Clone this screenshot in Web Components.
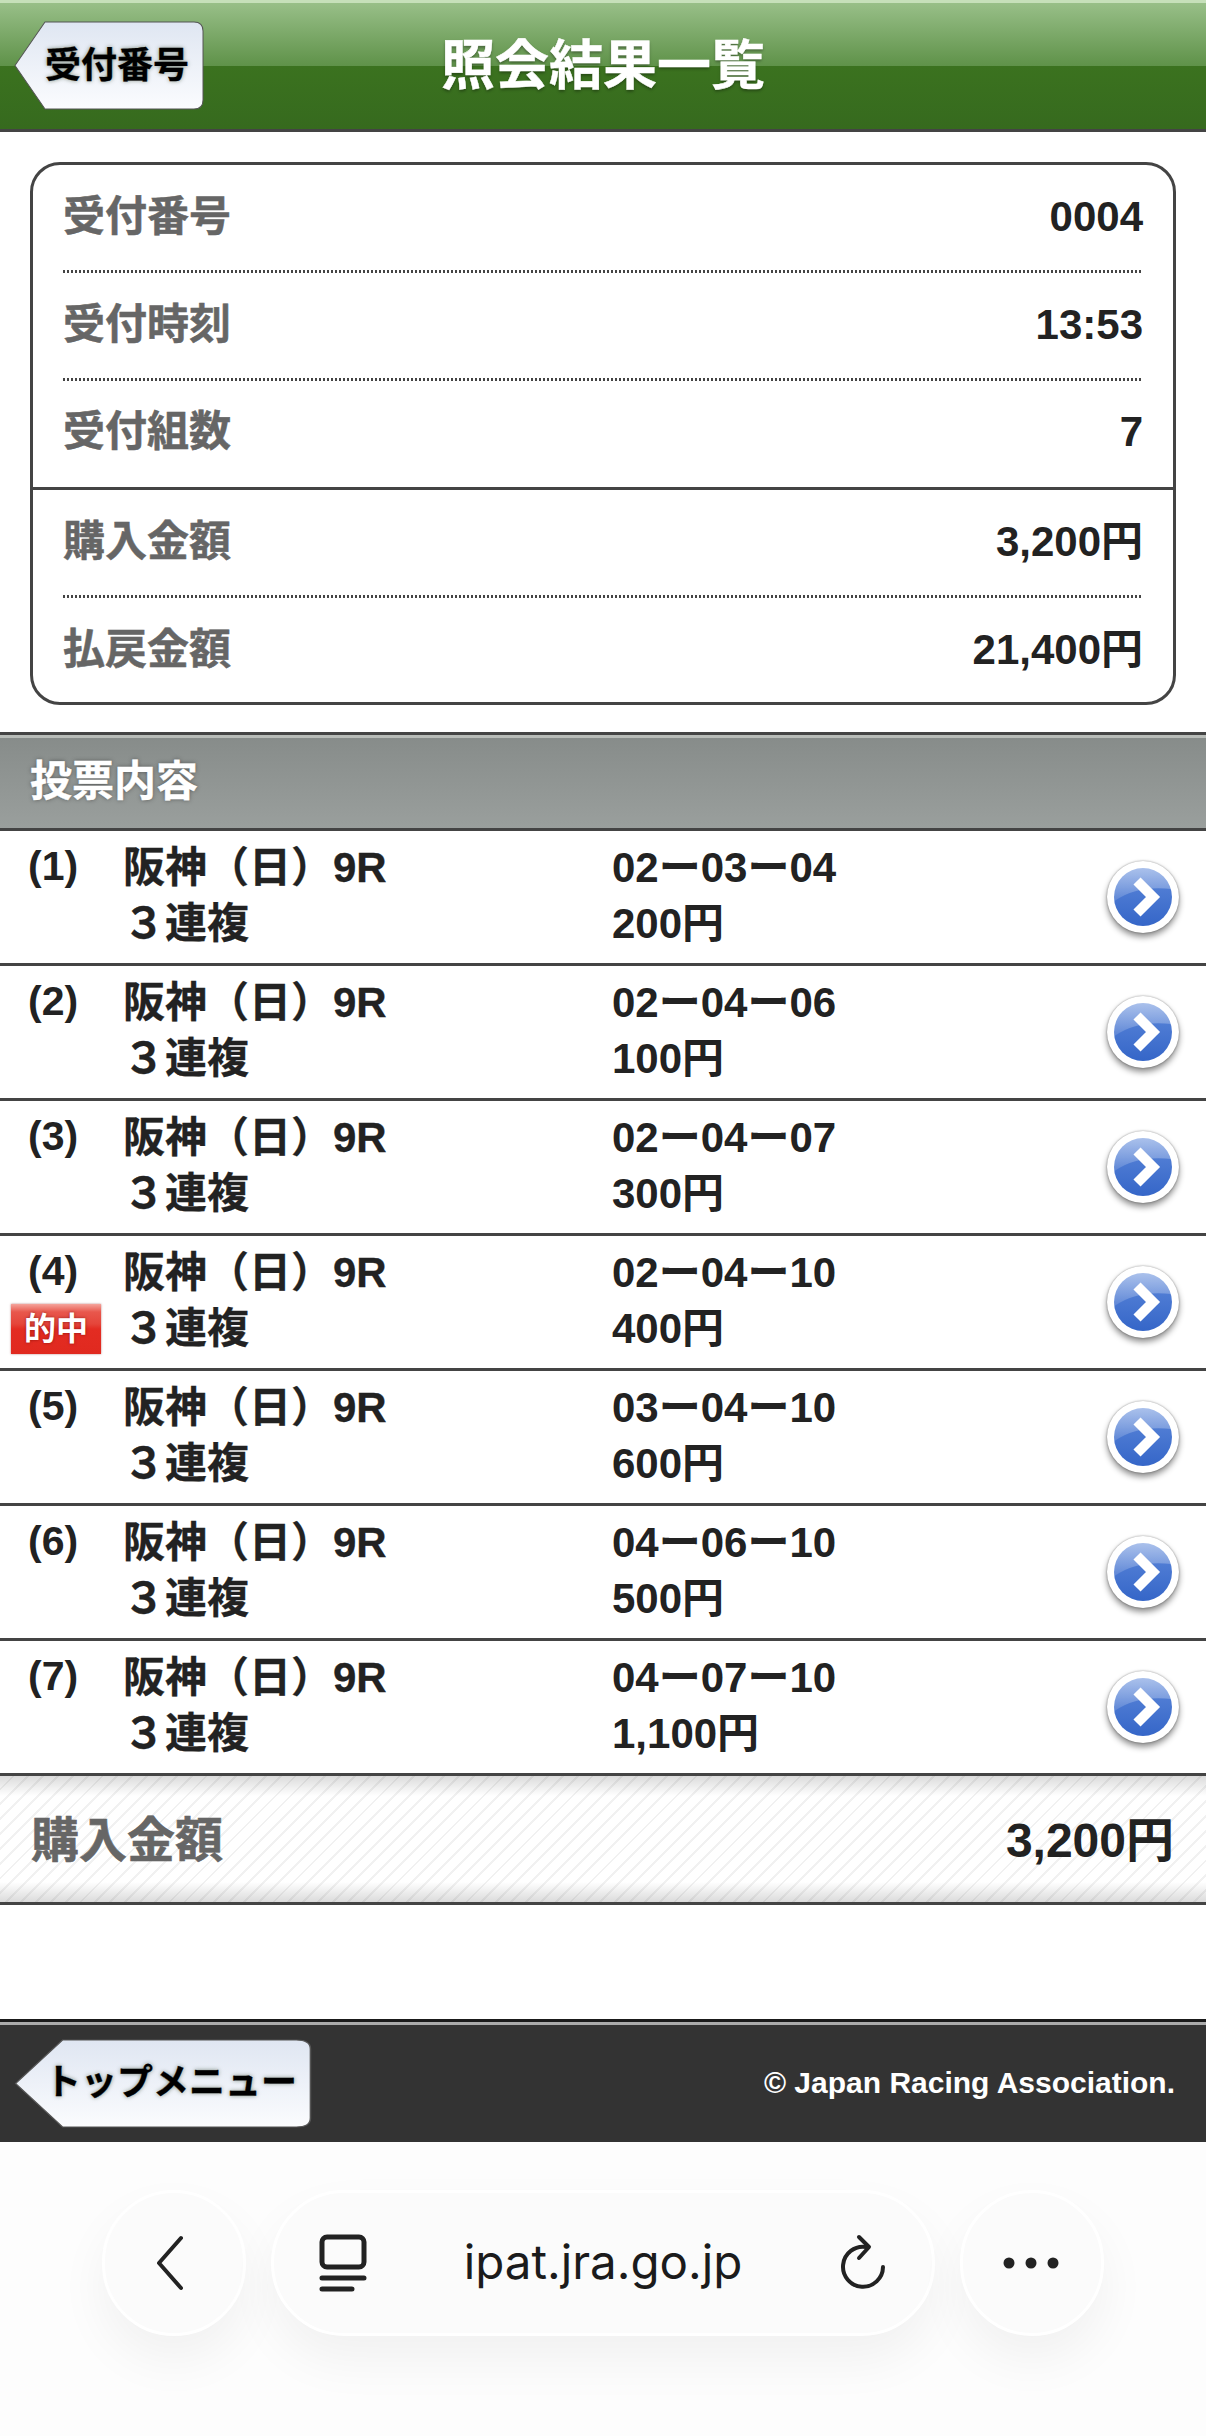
<!DOCTYPE html>
<html lang="ja">
<head>
<meta charset="utf-8">
<title>照会結果一覧</title>
<style>
  html, body { margin: 0; padding: 0; background: #fff; }
  body { font-family: "Liberation Sans", "Noto Sans CJK JP", sans-serif; font-weight: 700; color: #222; }
  .cjk { -webkit-text-stroke: .3px #222; }
</style>
</head>
<body>
<jra-header>
  <back-tag slot="back" size="36">受付番号</back-tag>
  照会結果一覧
</jra-header>

<summary-card>
  <summary-row label="受付番号">0004</summary-row>
  <summary-row label="受付時刻">13:53</summary-row>
  <summary-row label="受付組数" end>7</summary-row>
  <summary-row label="購入金額">3,200円</summary-row>
  <summary-row label="払戻金額" plain>21,400円</summary-row>
</summary-card>

<section-bar>投票内容</section-bar>

<bet-row><span slot="num">(1)</span><span slot="race" class="cjk">阪神（日）9R</span><span slot="kind" class="cjk">３連複</span><span slot="combo">02ー03ー04</span><span slot="amount">200円</span></bet-row>
<bet-row><span slot="num">(2)</span><span slot="race" class="cjk">阪神（日）9R</span><span slot="kind" class="cjk">３連複</span><span slot="combo">02ー04ー06</span><span slot="amount">100円</span></bet-row>
<bet-row><span slot="num">(3)</span><span slot="race" class="cjk">阪神（日）9R</span><span slot="kind" class="cjk">３連複</span><span slot="combo">02ー04ー07</span><span slot="amount">300円</span></bet-row>
<bet-row><span slot="num">(4)</span><hit-badge slot="badge">的中</hit-badge><span slot="race" class="cjk">阪神（日）9R</span><span slot="kind" class="cjk">３連複</span><span slot="combo">02ー04ー10</span><span slot="amount">400円</span></bet-row>
<bet-row><span slot="num">(5)</span><span slot="race" class="cjk">阪神（日）9R</span><span slot="kind" class="cjk">３連複</span><span slot="combo">03ー04ー10</span><span slot="amount">600円</span></bet-row>
<bet-row><span slot="num">(6)</span><span slot="race" class="cjk">阪神（日）9R</span><span slot="kind" class="cjk">３連複</span><span slot="combo">04ー06ー10</span><span slot="amount">500円</span></bet-row>
<bet-row><span slot="num">(7)</span><span slot="race" class="cjk">阪神（日）9R</span><span slot="kind" class="cjk">３連複</span><span slot="combo">04ー07ー10</span><span slot="amount">1,100円</span></bet-row>

<total-bar label="購入金額">3,200円</total-bar>

<jra-footer>
  <back-tag slot="back" size="36">トップメニュー</back-tag>
  © Japan Racing Association.
</jra-footer>

<browser-bar>ipat.jra.go.jp</browser-bar>

<script>
class JraHeader extends HTMLElement {
    connectedCallback() {
        this.attachShadow({ mode: 'open' }).innerHTML = `
        <style>
            :host { display: block; height: 129px; border-bottom: 3px solid #444;
                background: linear-gradient(#c6e0ba 0 3px, #98bf88 3px, #5f9249 66px, #3b721f 66px, #366a1e 129px); }
            .bar { display: grid; grid-template-columns: 1fr auto 1fr; align-items: start; padding-top: 21px; }
            .tag { padding-left: 14px; }
            .title { font-size: 54px; line-height: 82px; margin-top: 4px; color: #fff; -webkit-text-stroke: .4px #fff; text-shadow: 0 2px 3px rgba(0,0,0,.35); }
        </style>
        <div class="bar">
            <div class="tag"><slot name="back"></slot></div>
            <div class="title"><slot></slot></div>
            <div></div>
        </div>`;
    }
}

class BackTag extends HTMLElement {
    connectedCallback() {
        const size = this.getAttribute('size') || 36;
        this.attachShadow({ mode: 'open' }).innerHTML = `
        <style>
            :host { display: inline-flex; position: relative; align-items: center; height: 89px; padding: 0 15px 0 31px;
                color: #000; font-size: ${size}px; line-height: 1; -webkit-text-stroke: .3px #000; text-shadow: 0 0 4px rgba(30,50,20,.55); }
            svg { position: absolute; left: 0; top: 0; width: 100%; height: 100%; }
            span { position: relative; white-space: nowrap; }
        </style>
        <svg viewBox="0 0 190 89" preserveAspectRatio="none">
            <defs><linearGradient id="g" x1="0" y1="0" x2="0" y2="1">
                <stop offset="0" stop-color="#dfe6f2"/><stop offset="1" stop-color="#fbfcfe"/>
            </linearGradient></defs>
            <path d="M1 44.5 L31 1 H180 Q189 1 189 10 V79 Q189 88 180 88 H31 Z" fill="url(#g)" stroke="#555" stroke-width="1"/>
        </svg>
        <span><slot></slot></span>`;
    }
}

class SummaryCard extends HTMLElement {
    connectedCallback() {
        this.attachShadow({ mode: 'open' }).innerHTML = `
        <style>
            :host { display: block; margin: 30px 30px 27px; height: 537px; border: 3px solid #444; border-radius: 30px; overflow: hidden; }
        </style>
        <slot></slot>`;
    }
}

class SummaryRow extends HTMLElement {
    connectedCallback() {
        this.attachShadow({ mode: 'open' }).innerHTML = `
        <style>
            :host { display: block; padding: 0 30px; }
            :host([end]) { border-bottom: 3px solid #444; }
            .row { display: flex; justify-content: space-between; align-items: center; height: 108px; box-sizing: border-box; padding-bottom: 4px;
                font-size: 42px; line-height: 56px;
                background: repeating-linear-gradient(90deg, #444 0 2px, transparent 2px 4px) left bottom / 100% 3px no-repeat; }
            :host([end]) .row, :host([plain]) .row { background: none; }
            :host([end]) .row { height: 106px; }
            .label { color: #666; -webkit-text-stroke: .5px #666; }
            .value { color: #222; }
        </style>
        <div class="row"><span class="label">${this.getAttribute('label')}</span><span class="value"><slot></slot></span></div>`;
    }
}

class SectionBar extends HTMLElement {
    connectedCallback() {
        this.attachShadow({ mode: 'open' }).innerHTML = `
        <style>
            :host { display: block; border-top: 3px solid #444; border-bottom: 3px solid #444; height: 93px;
                padding-left: 30px; font-size: 42px; line-height: 93px; color: #fff; -webkit-text-stroke: .4px #fff;
                background: linear-gradient(#b8bcb8 0 3px, #878c8a 3px, #9a9f9d);
                text-shadow: 0 0 4px rgba(40,40,40,.6); }
        </style>
        <slot></slot>`;
    }
}

class BetRow extends HTMLElement {
    connectedCallback() {
        this.attachShadow({ mode: 'open' }).innerHTML = `
        <style>
            :host { display: grid; grid-template-columns: 123px 489px 1fr 98px; grid-auto-rows: 56px; align-items: center;
                padding: 9px 0 11px; border-bottom: 3px solid #444; font-size: 42px; color: #222; line-height: 56px; white-space: nowrap; }
            .num { padding-left: 28px; margin-top: -4px; font-size: 41px; }
            .badge { padding-left: 11px; display: flex; }
            .arrow { grid-column: 4; grid-row: 1 / span 2; display: flex; margin: 2px 0 0 -1px; }
        </style>
        <div class="num"><slot name="num"></slot></div>
        <div><slot name="race"></slot></div>
        <div><slot name="combo"></slot></div>
        <div class="arrow"><arrow-button></arrow-button></div>
        <div class="badge"><slot name="badge"></slot></div>
        <div><slot name="kind"></slot></div>
        <div><slot name="amount"></slot></div>`;
    }
}

class ArrowButton extends HTMLElement {
    connectedCallback() {
        this.attachShadow({ mode: 'open' }).innerHTML = `
        <style>
            :host { display: block; width: 72px; height: 72px; border-radius: 50%; background: #fff;
                box-shadow: 0 4px 6px rgba(0,0,0,.45), 0 0 2px rgba(0,0,0,.4); }
            svg { display: block; width: 72px; height: 72px; }
        </style>
        <svg viewBox="0 0 72 72">
            <defs>
                <linearGradient id="b" x1="0" y1="0" x2="0" y2="1">
                    <stop offset="0" stop-color="#5d88da"/><stop offset="1" stop-color="#3566c8"/>
                </linearGradient>
                <linearGradient id="s" x1="0" y1="0" x2="0" y2="1">
                    <stop offset="0" stop-color="#fff" stop-opacity=".5"/><stop offset="1" stop-color="#fff" stop-opacity=".12"/>
                </linearGradient>
            </defs>
            <circle cx="36" cy="36" r="29" fill="url(#b)"/>
            <path d="M7.5 40 Q30 24 64.5 28 A29 29 0 0 0 7.5 40 Z" fill="url(#s)"/>
            <path d="M30 20 L46 36 L30 52" fill="none" stroke="#fff" stroke-width="10"/>
        </svg>`;
    }
}

class HitBadge extends HTMLElement {
    connectedCallback() {
        this.attachShadow({ mode: 'open' }).innerHTML = `
        <style>
            :host { display: block; width: 90px; height: 50px; font-size: 32px; line-height: 50px; text-align: center; color: #fff;
                background: linear-gradient(#f4a49c, #e8574c 8px, #e5453a 40%, #e32c22 50%, #e0291f);
                box-shadow: 0 0 2px rgba(120,0,0,.5); text-shadow: 0 0 3px rgba(90,0,0,.6); }
        </style>
        <slot></slot>`;
    }
}

class TotalBar extends HTMLElement {
    connectedCallback() {
        this.attachShadow({ mode: 'open' }).innerHTML = `
        <style>
            :host { display: flex; justify-content: space-between; align-items: center; height: 123px; padding: 3px 32px 0 31px;
                border-bottom: 3px solid #444; font-size: 48px; line-height: 60px; color: #222;
                background:
                    linear-gradient(rgba(0,0,0,.14), rgba(0,0,0,0) 20px, rgba(0,0,0,0) 106px, rgba(0,0,0,.14)),
                    repeating-linear-gradient(135deg, #fff 0 8.5px, #f1f1f1 8.5px 10.5px); }
            .label { color: #666; -webkit-text-stroke: .6px #666; }
        </style>
        <span class="label">${this.getAttribute('label')}</span><span class="value"><slot></slot></span>`;
    }
}

class JraFooter extends HTMLElement {
    connectedCallback() {
        this.attachShadow({ mode: 'open' }).innerHTML = `
        <style>
            :host { display: flex; justify-content: space-between; align-items: center; height: 123px;
                margin-top: 114px; padding: 2px 31px 0 14px; box-sizing: border-box;
                border-top: 3px solid #1a1a1a; box-shadow: inset 0 3px 0 #aaa; background: #333; color: #fff; font-size: 30px; }
        </style>
        <slot name="back"></slot><span><slot></slot></span>`;
    }
}

class BrowserBar extends HTMLElement {
    connectedCallback() {
        this.attachShadow({ mode: 'open' }).innerHTML = `
        <style>
            :host { display: flex; gap: 25px; height: 294px; padding: 48px 0 0 102px; box-sizing: border-box;
                background: #fdfdfd; color: #1b1b1b; font-family: Inter, "Liberation Sans", sans-serif; font-weight: 400; }
            .pill { height: 146px; box-sizing: border-box; border: 3px solid #fff; border-radius: 73px; background: #fbfbfb;
                box-shadow: 0 24px 50px rgba(0,0,0,.05); display: flex; align-items: center; }
            .round { width: 144px; justify-content: center; }
            .back { padding-right: 8px; box-sizing: border-box; }
            .url { width: 664px; padding: 0 45px; justify-content: space-between; font-size: 47.5px; }
            .url span { margin-top: -4px; }
            svg { display: block; fill: none; stroke: #222; stroke-linecap: round; stroke-linejoin: round; }
        </style>
        <div class="pill round back">
            <svg width="30" height="56" viewBox="0 0 30 56" stroke-width="4"><path d="M26 3 L4 28 L26 53"/></svg>
        </div>
        <div class="pill url">
            <svg width="48" height="58" viewBox="0 0 48 58" stroke-width="5"><rect x="3" y="3" width="42" height="30" rx="5"/><path d="M3 44 H45 M3 55 H33"/></svg>
            <span><slot></slot></span>
            <svg width="48" height="58" viewBox="0 0 48 58" stroke-width="4"><path d="M27 13 A20 20 0 1 0 44 33"/><path d="M20 3 L30 13 L20 24"/></svg>
        </div>
        <div class="pill round">
            <svg width="60" height="12" viewBox="0 0 60 12" style="fill:#222;stroke:none"><circle cx="7" cy="6" r="5.5"/><circle cx="29" cy="6" r="5.5"/><circle cx="51" cy="6" r="5.5"/></svg>
        </div>`;
    }
}

customElements.define('jra-header', JraHeader);
customElements.define('back-tag', BackTag);
customElements.define('summary-card', SummaryCard);
customElements.define('summary-row', SummaryRow);
customElements.define('section-bar', SectionBar);
customElements.define('bet-row', BetRow);
customElements.define('arrow-button', ArrowButton);
customElements.define('hit-badge', HitBadge);
customElements.define('total-bar', TotalBar);
customElements.define('jra-footer', JraFooter);
customElements.define('browser-bar', BrowserBar);
</script>
</body>
</html>
